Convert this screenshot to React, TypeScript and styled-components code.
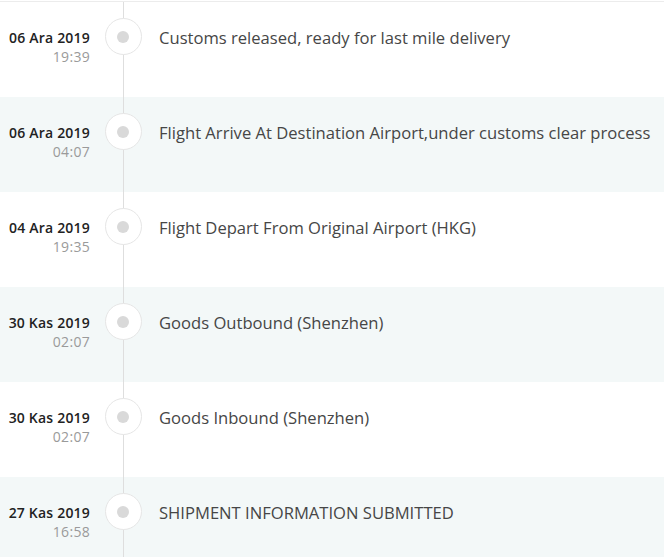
import styled, { createGlobalStyle } from 'styled-components';

const GlobalStyle = createGlobalStyle`
  html, body {
    margin: 0;
    padding: 0;
    background: #fff;
  }
  body {
    font-family: "Open Sans", Lato, Arial, sans-serif;
  }
`;

const Timeline = styled.ul`
  list-style: none;
  margin: 0;
  padding: 0;
  border-top: 1px solid #ececec;
  margin-top: 1px;
`;

const Row = styled.li<{ shaded: boolean }>`
  display: grid;
  grid-template-columns: 90px 15px 36px 18px 1fr;
  height: 95px;
  background: ${(props) => (props.shaded ? '#f3f8f8' : '#fff')};
`;

const DateCell = styled.div`
  grid-column: 1;
  padding-top: 27px;
  text-align: right;
`;

const Day = styled.div`
  font-size: 14px;
  font-weight: 600;
  letter-spacing: 0.2px;
  color: #222;
  line-height: 17px;
`;

const Time = styled.div`
  font-size: 14px;
  letter-spacing: 0.3px;
  color: #9a9a9a;
  line-height: 17px;
  margin-top: 2px;
`;

// track column carries the vertical line through every row
const Track = styled.div`
  grid-column: 3;
  background: linear-gradient(
    to right,
    transparent 17.5px,
    #dedede 17.5px,
    #dedede 18.5px,
    transparent 18.5px
  );
  padding-top: 16px;
`;

const Marker = styled.div`
  box-sizing: border-box;
  width: 37px;
  height: 37px;
  margin-left: -0.5px;
  border-radius: 50%;
  border: 1px solid #e6e6e6;
  background: #fff;
  display: flex;
  align-items: center;
  justify-content: center;
`;

const Dot = styled.span`
  width: 12px;
  height: 12px;
  border-radius: 50%;
  background: #d9d9d9;
`;

const Message = styled.div`
  grid-column: 5;
  padding-top: 25px;
  font-size: 16.6px;
  line-height: 22px;
  color: #464646;
  white-space: nowrap;
`;

const events = [
  { day: '06 Ara 2019', time: '19:39', text: 'Customs released, ready for last mile delivery' },
  { day: '06 Ara 2019', time: '04:07', text: 'Flight Arrive At Destination Airport,under customs clear process' },
  { day: '04 Ara 2019', time: '19:35', text: 'Flight Depart From Original Airport (HKG)' },
  { day: '30 Kas 2019', time: '02:07', text: 'Goods Outbound (Shenzhen)' },
  { day: '30 Kas 2019', time: '02:07', text: 'Goods Inbound (Shenzhen)' },
  { day: '27 Kas 2019', time: '16:58', text: 'SHIPMENT INFORMATION SUBMITTED' },
];

export default function App() {
  return (
    <>
      <GlobalStyle />
      <Timeline>
        {events.map((event, index) => (
          <Row key={index} shaded={index % 2 === 1}>
            <DateCell>
              <Day>{event.day}</Day>
              <Time>{event.time}</Time>
            </DateCell>
            <Track>
              <Marker>
                <Dot />
              </Marker>
            </Track>
            <Message>{event.text}</Message>
          </Row>
        ))}
      </Timeline>
    </>
  );
}
